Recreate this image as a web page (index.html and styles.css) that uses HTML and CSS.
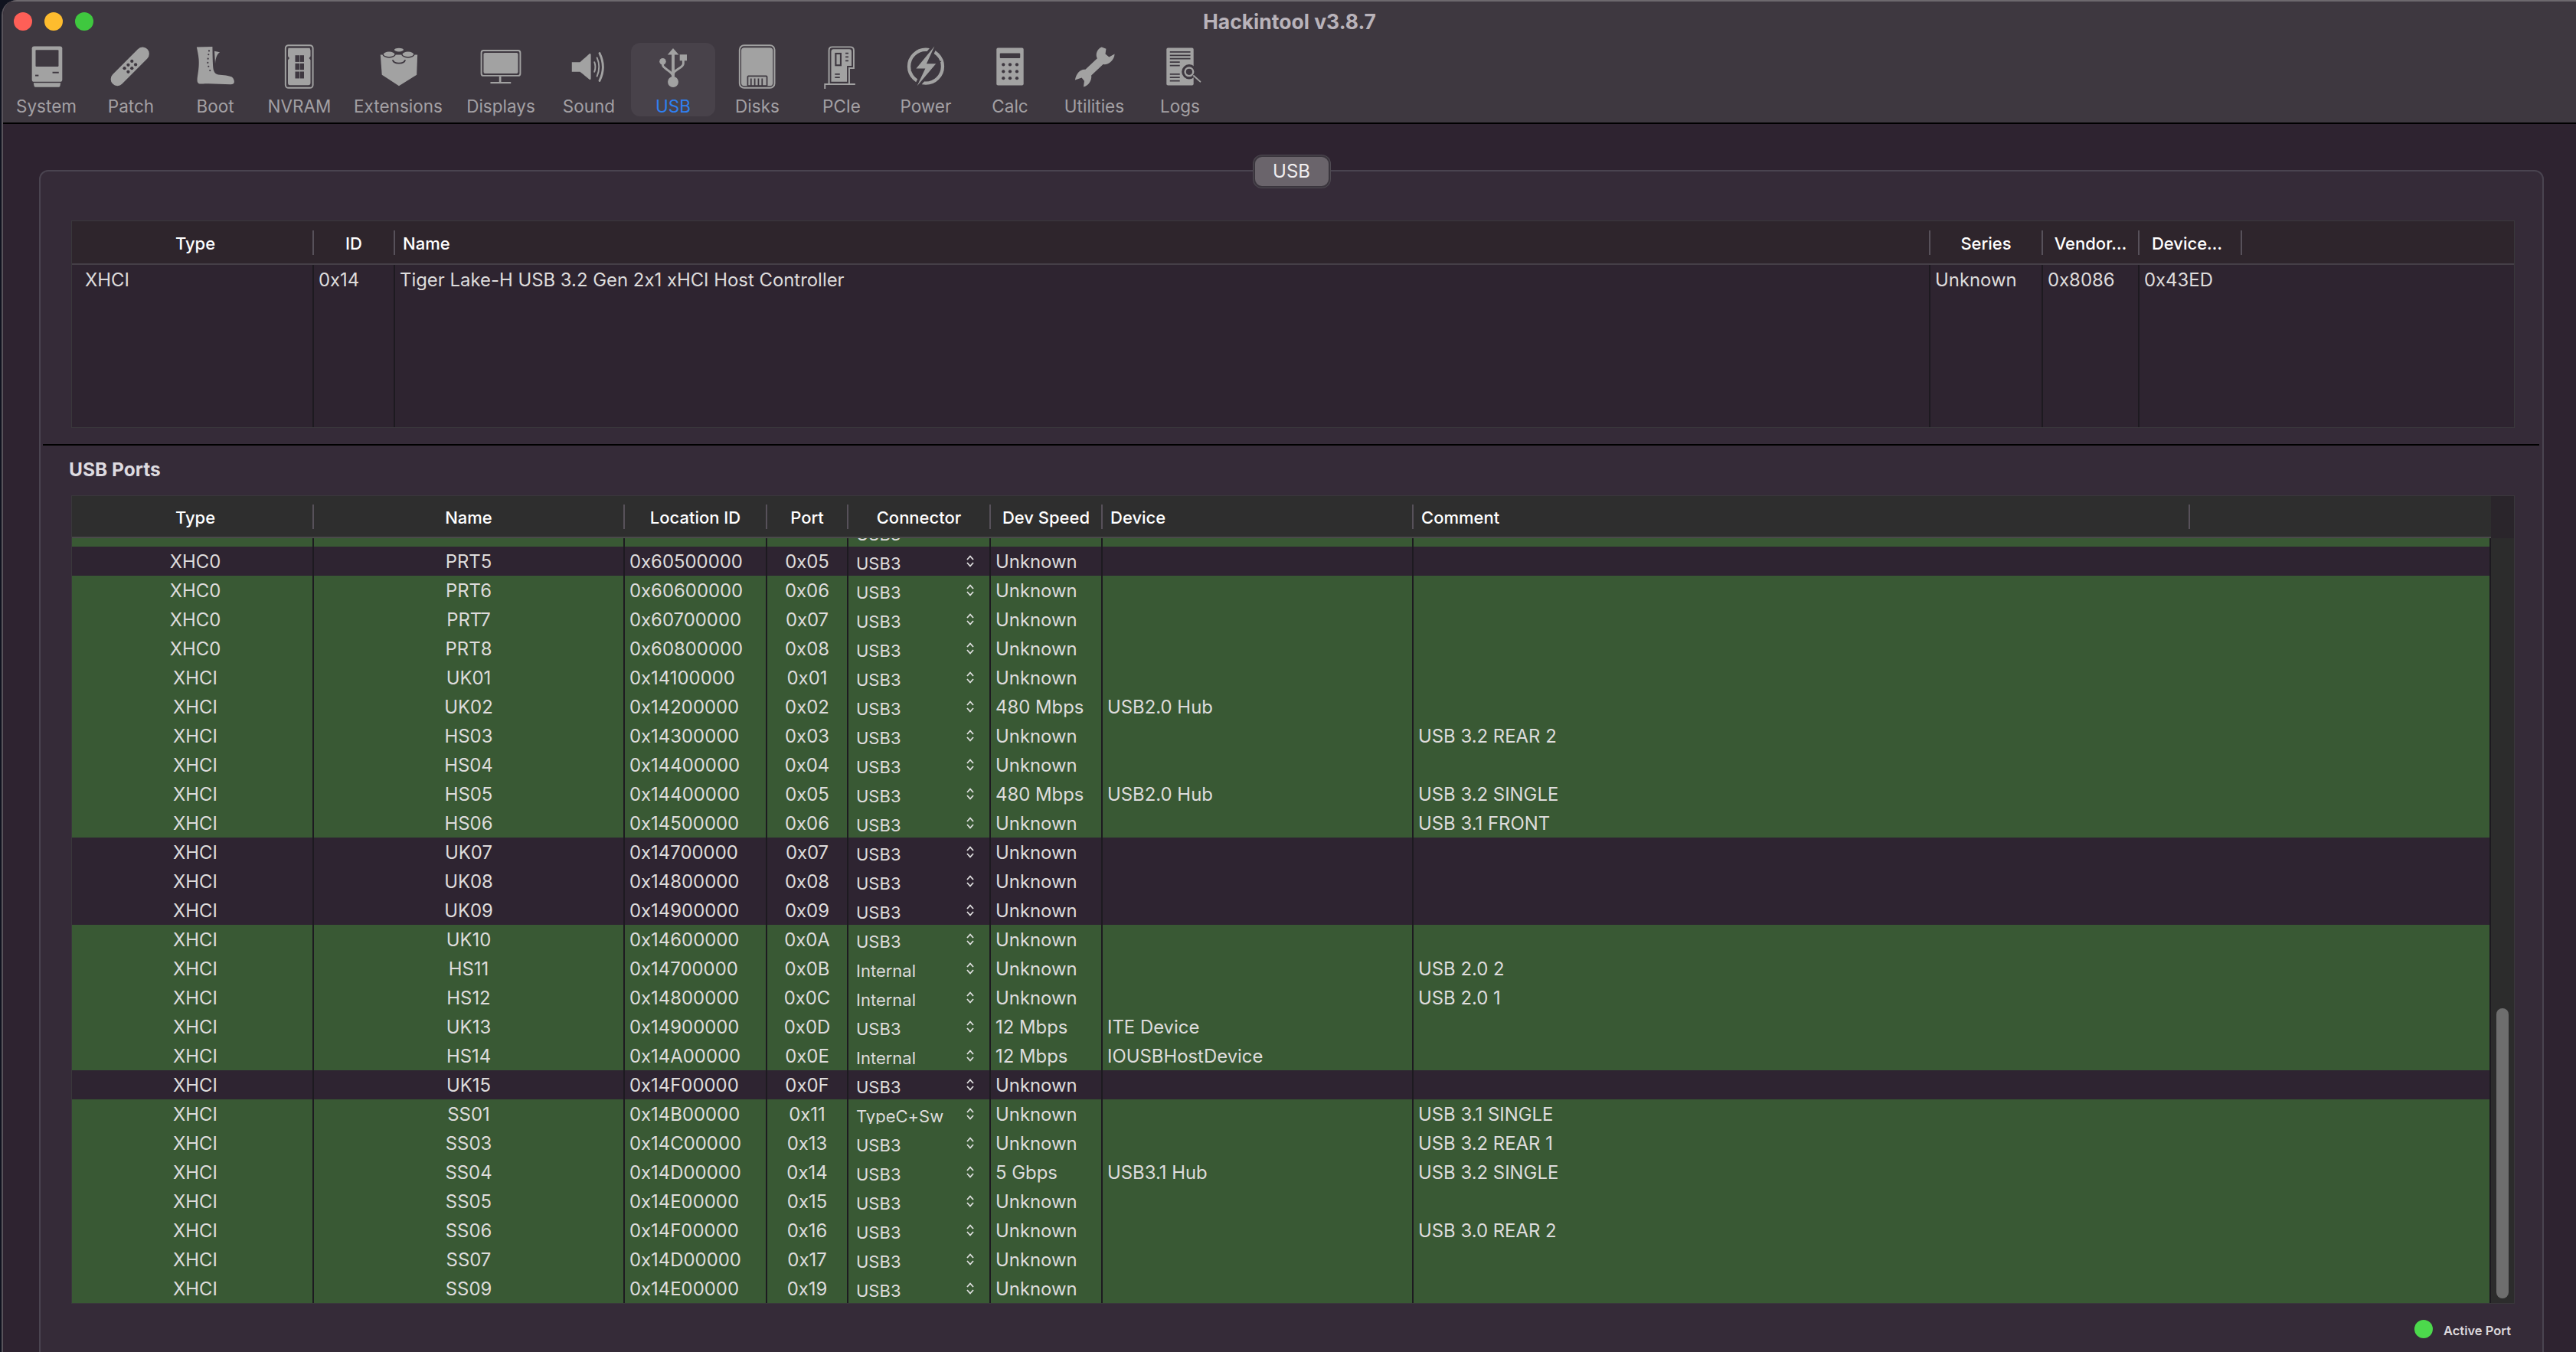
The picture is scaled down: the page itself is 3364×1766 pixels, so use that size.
FILE: index.html
```html
<!DOCTYPE html>
<html lang="en">
<head>
<meta charset="utf-8">
<title>Hackintool v3.8.7</title>
<link rel="stylesheet" href="styles.css">
</head>
<body>
<svg class="defs" width="0" height="0" aria-hidden="true">
  <symbol id="updown" viewBox="0 0 10 16"><path d="M1 6 5 1.500 9 6M1 10 5 14.500 9 10" fill="none" stroke="currentColor" stroke-width="1.800"/></symbol>
</svg>
<div class="window">
  <header class="chrome">
    <div class="titlebar">
      <div class="lights"><span class="light red"></span><span class="light yellow"></span><span class="light green"></span></div>
      <div class="title">Hackintool v3.8.7</div>
    </div>
    <nav class="toolbar">
      <div class="tool tool-first">
        <svg class="icon" viewBox="20.500 58 80 60"><rect x="40.500" y="60.500" width="41" height="48" rx="3"/><path d="M42.700 110H79.300L78.500 114.500Q78.300 115.700 77 115.700H45Q43.700 115.700 43.500 114.500Z"/><g class="hole"><rect x="45.500" y="65.500" width="31" height="22.500" rx="1"/><rect x="45" y="99" width="4.500" height="2"/><rect x="68.300" y="95" width="8.500" height="2"/></g></svg>
        <span class="tool-label">System</span>
      </div>
      <div class="tool">
        <svg class="icon" viewBox="131 58 80 60"><path class="thick" d="M152.700 105 186.700 70.700"/><g class="hole"><circle cx="172.300" cy="80.700" r="2.200"/><circle cx="167.300" cy="85.700" r="2.200"/><circle cx="162.300" cy="90.300" r="2.200"/><circle cx="177.300" cy="85.300" r="2.200"/><circle cx="172.300" cy="90.300" r="2.200"/><circle cx="167.300" cy="95" r="2.200"/></g></svg>
        <span class="tool-label">Patch</span>
      </div>
      <div class="tool">
        <svg class="icon" viewBox="241 58 80 60"><path d="M256 61.500 277.300 61C277.500 70 277.500 82 278.300 90 279 95 281 98 285 98.800 292 99.500 300 100 303.500 102 306 104 307 107 306.700 109 306.500 111 305 112 302 112L272 111C266 110.500 262 112 259 111 257 110 256.500 108 256.800 104 258 95 259.500 88 258.800 78 258.300 72 257 66 256 61.500Z"/><path d="M280 67 287.300 68.500C283.500 71 281.500 76 281 84Z"/><g class="hole"><circle cx="272.700" cy="66.700" r="1.100"/><circle cx="272" cy="71.700" r="1.100"/><circle cx="271.300" cy="77.300" r="1.100"/><circle cx="271" cy="82.700" r="1.100"/><circle cx="272" cy="87.700" r="1.100"/><circle cx="274" cy="93.300" r="1.100"/></g></svg>
        <span class="tool-label">Boot</span>
      </div>
      <div class="tool">
        <svg class="icon" viewBox="351 58 80 60"><rect class="line" x="372.200" y="59.200" width="37" height="57.600" rx="4"/><path d="M376 63H405L406 66V74L404 76.500 406 79V110Q406 113 403 113H378Q375.500 113 375.500 110V79L377.500 76.500 375.500 74V66Z"/><g class="hole"><rect x="385.300" y="72.700" width="5.700" height="9"/><rect x="391.700" y="72.700" width="5.500" height="9"/><rect x="385.300" y="83.700" width="5.700" height="8.700"/><rect x="391.700" y="83.700" width="5.500" height="8.700"/><rect x="385.300" y="94.700" width="5.700" height="9.300"/><rect x="391.700" y="94.700" width="5.500" height="9.300"/></g></svg>
        <span class="tool-label">NVRAM</span>
      </div>
      <div class="tool tool-wide">
        <svg class="icon" viewBox="480 58 80 60"><path d="M496 72 546 72 545 99 521 114 498 99Z"/><g class="studs"><ellipse cx="521" cy="65.300" rx="7" ry="3.200"/><ellipse cx="507.700" cy="71.300" rx="8.300" ry="4.200"/><ellipse cx="533.300" cy="71.300" rx="8.300" ry="4.200"/></g><path class="hole-line" d="M512.500 79C514 85 528 85 529.500 79"/></svg>
        <span class="tool-label">Extensions</span>
      </div>
      <div class="tool tool-mid">
        <svg class="icon" viewBox="614 58 80 60"><rect class="line" x="627.700" y="66.300" width="52.600" height="34" rx="3"/><rect x="630.700" y="69.300" width="46.600" height="28" rx="2"/><rect x="651.700" y="101" width="2.800" height="8"/><rect x="640" y="108.700" width="27.700" height="2.200"/></svg>
        <span class="tool-label">Displays</span>
      </div>
      <div class="tool">
        <svg class="icon" viewBox="729 58 80 60"><path d="M746 82H757L770 70.500Q771.700 70 771.700 72V104Q771.700 106 770 105.500L757 95H746Z"/><path class="line" d="M776.500 82Q779 88.500 776.500 95M780 76Q785.500 88.500 780 101"/><path class="line line-thick" d="M783.500 70Q792.500 88.500 783.500 107"/></svg>
        <span class="tool-label">Sound</span>
      </div>
      <div class="tool tool-active">
        <svg class="icon" viewBox="839 58 80 60"><path d="M879 63.300 886.700 72H881V102H877V72H871.500Z"/><circle cx="879" cy="108.700" r="7.200"/><circle cx="865" cy="81" r="4.400"/><rect x="888" y="71.700" width="9.600" height="8.300"/><path class="line line-thick" d="M865 82V86C865 91 879 94 879 102M892.800 79V84C892.800 90 879 92 879 99"/></svg>
        <span class="tool-label">USB</span>
      </div>
      <div class="tool">
        <svg class="icon" viewBox="949 58 80 60"><rect class="line" x="965" y="59.300" width="47.300" height="57.400" rx="6"/><rect x="967.300" y="62.300" width="42.700" height="51.700" rx="4"/><path class="hole-line" d="M976 114V102Q976 100.800 977 100.800H1001Q1002 100.800 1002 102V114M980.500 104V114M985.500 104V114M990.500 104V114M995.500 104V114M976 114H1002"/></svg>
        <span class="tool-label">Disks</span>
      </div>
      <div class="tool">
        <svg class="icon" viewBox="1059 58 80 60"><path class="line" d="M1076.500 118V111.700H1116.700M1082 111.700V66Q1082 61.500 1086.500 61.500H1110.500Q1115.500 61.500 1115.500 66V90H1109.300V111.700"/><path d="M1085 68Q1085 64.500 1088 64.500H1109.500Q1112.500 64.500 1112.500 68V87H1106.300V108.500H1085Z"/><g class="hole"><rect x="1090" y="69.300" width="9" height="18"/></g><rect x="1092.200" y="71.500" width="4.600" height="13.600"/><path class="hole-line" d="M1104.300 70H1108.300M1104.300 75H1108.300M1104.300 80H1108.300M1090 98.300H1096.700M1090 102.500H1096.700"/></svg>
        <span class="tool-label">PCIe</span>
      </div>
      <div class="tool">
        <svg class="icon" viewBox="1169 58 80 60"><circle class="ring" cx="1209" cy="87.700" r="22.700"/><path class="bolt" d="M1220.700 60.700 1196 90.700H1208.300L1197.300 114 1222.700 84H1210Z"/></svg>
        <span class="tool-label">Power</span>
      </div>
      <div class="tool">
        <svg class="icon" viewBox="1279 58 80 60"><rect x="1300.700" y="62.700" width="36.600" height="50.600" rx="2"/><g class="hole"><rect x="1305.300" y="70" width="27.400" height="6.700" rx="1"/><circle cx="1310" cy="85.300" r="2.200"/><circle cx="1319" cy="85.300" r="2.200"/><circle cx="1328.300" cy="85.300" r="2.200"/><circle cx="1310" cy="94.700" r="2.200"/><circle cx="1319" cy="94.700" r="2.200"/><circle cx="1328.300" cy="94.700" r="2.200"/><circle cx="1310" cy="103.700" r="2.200"/><circle cx="1319" cy="103.700" r="2.200"/><circle cx="1328.300" cy="103.700" r="2.200"/></g></svg>
        <span class="tool-label">Calc</span>
      </div>
      <div class="tool">
        <svg class="icon" viewBox="1389 58 80 60"><path d="M1439 61.500C1433 64 1430 71 1433 77L1417 92C1411 91 1405 96 1403 106L1412 103 1415.500 107.500 1414.500 115.500C1421 114 1426 107 1425 100L1441 85C1448 86 1456 80 1456.500 71L1449 75 1444 71 1445 64Z"/></svg>
        <span class="tool-label">Utilities</span>
      </div>
      <div class="tool tool-last">
        <svg class="icon" viewBox="1501 58 80 60"><rect x="1522.700" y="62.700" width="36.600" height="50.600" rx="2"/><path class="hole-line" d="M1527.300 68.300H1555M1527.300 72.800H1555M1527.300 77.300H1555M1527.300 82H1540.700M1527.300 86.700H1540.700M1527.300 98.300H1540.700M1527.300 102.700H1540.700M1527.300 107.300H1540.700"/><circle class="halo" cx="1553.300" cy="95" r="10"/><circle class="lens" cx="1553.300" cy="95" r="5.500"/><path class="line" d="M1559.500 100.500 1568.300 108.300"/></svg>
        <span class="tool-label">Logs</span>
      </div>
    </nav>
  </header>
  <main class="content">
    <section class="box">
      <div class="box-tab">USB</div>

      <div class="table controllers">
        <div class="head ctrl-cols">
          <div class="hcell center">Type</div>
          <div class="hcell center">ID</div>
          <div class="hcell">Name</div>
          <div class="hcell center">Series</div>
          <div class="hcell center">Vendor…</div>
          <div class="hcell center">Device…</div>
        </div>
        <div class="ctrl-body ctrl-cols">
          <div class="cell cell-type">XHCI</div>
          <div class="cell">0x14</div>
          <div class="cell">Tiger Lake-H USB 3.2 Gen 2x1 xHCI Host Controller</div>
          <div class="cell">Unknown</div>
          <div class="cell">0x8086</div>
          <div class="cell cell-last">0x43ED</div>
        </div>
      </div>

      <div class="divider"></div>
      <h2 class="section-title">USB Ports</h2>

      <div class="table ports">
        <div class="ports-main">
          <div class="head head-ports">
            <div class="hcell center">Type</div>
            <div class="hcell center">Name</div>
            <div class="hcell center">Location ID</div>
            <div class="hcell center">Port</div>
            <div class="hcell center">Connector</div>
            <div class="hcell center">Dev Speed</div>
            <div class="hcell">Device</div>
            <div class="hcell">Comment</div>
            <div class="hcell hcell-end"></div>
          </div>
          <div class="ports-body">
            <div class="row first port-cols"><div class="cell center">XHC0</div><div class="cell center">PRT4</div><div class="cell">0x60400000</div><div class="cell center">0x04</div><div class="cell conn"><span class="conn-text">USB3</span><svg class="updown"><use href="#updown"/></svg></div><div class="cell">Unknown</div><div class="cell"></div><div class="cell"></div></div>
            <div class="row off port-cols"><div class="cell center">XHC0</div><div class="cell center">PRT5</div><div class="cell">0x60500000</div><div class="cell center">0x05</div><div class="cell conn"><span class="conn-text">USB3</span><svg class="updown"><use href="#updown"/></svg></div><div class="cell">Unknown</div><div class="cell"></div><div class="cell"></div></div>
            <div class="row port-cols"><div class="cell center">XHC0</div><div class="cell center">PRT6</div><div class="cell">0x60600000</div><div class="cell center">0x06</div><div class="cell conn"><span class="conn-text">USB3</span><svg class="updown"><use href="#updown"/></svg></div><div class="cell">Unknown</div><div class="cell"></div><div class="cell"></div></div>
            <div class="row port-cols"><div class="cell center">XHC0</div><div class="cell center">PRT7</div><div class="cell">0x60700000</div><div class="cell center">0x07</div><div class="cell conn"><span class="conn-text">USB3</span><svg class="updown"><use href="#updown"/></svg></div><div class="cell">Unknown</div><div class="cell"></div><div class="cell"></div></div>
            <div class="row port-cols"><div class="cell center">XHC0</div><div class="cell center">PRT8</div><div class="cell">0x60800000</div><div class="cell center">0x08</div><div class="cell conn"><span class="conn-text">USB3</span><svg class="updown"><use href="#updown"/></svg></div><div class="cell">Unknown</div><div class="cell"></div><div class="cell"></div></div>
            <div class="row port-cols"><div class="cell center">XHCI</div><div class="cell center">UK01</div><div class="cell">0x14100000</div><div class="cell center">0x01</div><div class="cell conn"><span class="conn-text">USB3</span><svg class="updown"><use href="#updown"/></svg></div><div class="cell">Unknown</div><div class="cell"></div><div class="cell"></div></div>
            <div class="row port-cols"><div class="cell center">XHCI</div><div class="cell center">UK02</div><div class="cell">0x14200000</div><div class="cell center">0x02</div><div class="cell conn"><span class="conn-text">USB3</span><svg class="updown"><use href="#updown"/></svg></div><div class="cell">480 Mbps</div><div class="cell">USB2.0 Hub</div><div class="cell"></div></div>
            <div class="row port-cols"><div class="cell center">XHCI</div><div class="cell center">HS03</div><div class="cell">0x14300000</div><div class="cell center">0x03</div><div class="cell conn"><span class="conn-text">USB3</span><svg class="updown"><use href="#updown"/></svg></div><div class="cell">Unknown</div><div class="cell"></div><div class="cell">USB 3.2 REAR 2</div></div>
            <div class="row port-cols"><div class="cell center">XHCI</div><div class="cell center">HS04</div><div class="cell">0x14400000</div><div class="cell center">0x04</div><div class="cell conn"><span class="conn-text">USB3</span><svg class="updown"><use href="#updown"/></svg></div><div class="cell">Unknown</div><div class="cell"></div><div class="cell"></div></div>
            <div class="row port-cols"><div class="cell center">XHCI</div><div class="cell center">HS05</div><div class="cell">0x14400000</div><div class="cell center">0x05</div><div class="cell conn"><span class="conn-text">USB3</span><svg class="updown"><use href="#updown"/></svg></div><div class="cell">480 Mbps</div><div class="cell">USB2.0 Hub</div><div class="cell">USB 3.2 SINGLE</div></div>
            <div class="row port-cols"><div class="cell center">XHCI</div><div class="cell center">HS06</div><div class="cell">0x14500000</div><div class="cell center">0x06</div><div class="cell conn"><span class="conn-text">USB3</span><svg class="updown"><use href="#updown"/></svg></div><div class="cell">Unknown</div><div class="cell"></div><div class="cell">USB 3.1 FRONT</div></div>
            <div class="row off port-cols"><div class="cell center">XHCI</div><div class="cell center">UK07</div><div class="cell">0x14700000</div><div class="cell center">0x07</div><div class="cell conn"><span class="conn-text">USB3</span><svg class="updown"><use href="#updown"/></svg></div><div class="cell">Unknown</div><div class="cell"></div><div class="cell"></div></div>
            <div class="row off port-cols"><div class="cell center">XHCI</div><div class="cell center">UK08</div><div class="cell">0x14800000</div><div class="cell center">0x08</div><div class="cell conn"><span class="conn-text">USB3</span><svg class="updown"><use href="#updown"/></svg></div><div class="cell">Unknown</div><div class="cell"></div><div class="cell"></div></div>
            <div class="row off port-cols"><div class="cell center">XHCI</div><div class="cell center">UK09</div><div class="cell">0x14900000</div><div class="cell center">0x09</div><div class="cell conn"><span class="conn-text">USB3</span><svg class="updown"><use href="#updown"/></svg></div><div class="cell">Unknown</div><div class="cell"></div><div class="cell"></div></div>
            <div class="row port-cols"><div class="cell center">XHCI</div><div class="cell center">UK10</div><div class="cell">0x14600000</div><div class="cell center">0x0A</div><div class="cell conn"><span class="conn-text">USB3</span><svg class="updown"><use href="#updown"/></svg></div><div class="cell">Unknown</div><div class="cell"></div><div class="cell"></div></div>
            <div class="row port-cols"><div class="cell center">XHCI</div><div class="cell center">HS11</div><div class="cell">0x14700000</div><div class="cell center">0x0B</div><div class="cell conn"><span class="conn-text">Internal</span><svg class="updown"><use href="#updown"/></svg></div><div class="cell">Unknown</div><div class="cell"></div><div class="cell">USB 2.0 2</div></div>
            <div class="row port-cols"><div class="cell center">XHCI</div><div class="cell center">HS12</div><div class="cell">0x14800000</div><div class="cell center">0x0C</div><div class="cell conn"><span class="conn-text">Internal</span><svg class="updown"><use href="#updown"/></svg></div><div class="cell">Unknown</div><div class="cell"></div><div class="cell">USB 2.0 1</div></div>
            <div class="row port-cols"><div class="cell center">XHCI</div><div class="cell center">UK13</div><div class="cell">0x14900000</div><div class="cell center">0x0D</div><div class="cell conn"><span class="conn-text">USB3</span><svg class="updown"><use href="#updown"/></svg></div><div class="cell">12 Mbps</div><div class="cell">ITE Device</div><div class="cell"></div></div>
            <div class="row port-cols"><div class="cell center">XHCI</div><div class="cell center">HS14</div><div class="cell">0x14A00000</div><div class="cell center">0x0E</div><div class="cell conn"><span class="conn-text">Internal</span><svg class="updown"><use href="#updown"/></svg></div><div class="cell">12 Mbps</div><div class="cell">IOUSBHostDevice</div><div class="cell"></div></div>
            <div class="row off port-cols"><div class="cell center">XHCI</div><div class="cell center">UK15</div><div class="cell">0x14F00000</div><div class="cell center">0x0F</div><div class="cell conn"><span class="conn-text">USB3</span><svg class="updown"><use href="#updown"/></svg></div><div class="cell">Unknown</div><div class="cell"></div><div class="cell"></div></div>
            <div class="row port-cols"><div class="cell center">XHCI</div><div class="cell center">SS01</div><div class="cell">0x14B00000</div><div class="cell center">0x11</div><div class="cell conn"><span class="conn-text">TypeC+Sw</span><svg class="updown"><use href="#updown"/></svg></div><div class="cell">Unknown</div><div class="cell"></div><div class="cell">USB 3.1 SINGLE</div></div>
            <div class="row port-cols"><div class="cell center">XHCI</div><div class="cell center">SS03</div><div class="cell">0x14C00000</div><div class="cell center">0x13</div><div class="cell conn"><span class="conn-text">USB3</span><svg class="updown"><use href="#updown"/></svg></div><div class="cell">Unknown</div><div class="cell"></div><div class="cell">USB 3.2 REAR 1</div></div>
            <div class="row port-cols"><div class="cell center">XHCI</div><div class="cell center">SS04</div><div class="cell">0x14D00000</div><div class="cell center">0x14</div><div class="cell conn"><span class="conn-text">USB3</span><svg class="updown"><use href="#updown"/></svg></div><div class="cell">5 Gbps</div><div class="cell">USB3.1 Hub</div><div class="cell">USB 3.2 SINGLE</div></div>
            <div class="row port-cols"><div class="cell center">XHCI</div><div class="cell center">SS05</div><div class="cell">0x14E00000</div><div class="cell center">0x15</div><div class="cell conn"><span class="conn-text">USB3</span><svg class="updown"><use href="#updown"/></svg></div><div class="cell">Unknown</div><div class="cell"></div><div class="cell"></div></div>
            <div class="row port-cols"><div class="cell center">XHCI</div><div class="cell center">SS06</div><div class="cell">0x14F00000</div><div class="cell center">0x16</div><div class="cell conn"><span class="conn-text">USB3</span><svg class="updown"><use href="#updown"/></svg></div><div class="cell">Unknown</div><div class="cell"></div><div class="cell">USB 3.0 REAR 2</div></div>
            <div class="row port-cols"><div class="cell center">XHCI</div><div class="cell center">SS07</div><div class="cell">0x14D00000</div><div class="cell center">0x17</div><div class="cell conn"><span class="conn-text">USB3</span><svg class="updown"><use href="#updown"/></svg></div><div class="cell">Unknown</div><div class="cell"></div><div class="cell"></div></div>
            <div class="row port-cols"><div class="cell center">XHCI</div><div class="cell center">SS09</div><div class="cell">0x14E00000</div><div class="cell center">0x19</div><div class="cell conn"><span class="conn-text">USB3</span><svg class="updown"><use href="#updown"/></svg></div><div class="cell">Unknown</div><div class="cell"></div><div class="cell"></div></div>
          </div>
        </div>
        <div class="scrollbar">
          <div class="scroll-corner"></div>
          <div class="scroll-track"><div class="scroll-thumb"></div></div>
        </div>
      </div>

      <div class="legend"><span class="legend-dot"></span><span class="legend-text">Active Port</span></div>
    </section>
  </main>
</div>
</body>
</html>
```

FILE: styles.css
```css
* { box-sizing: border-box; }

html, body {
  margin: 0;
  height: 1766px;
  overflow: hidden;
  background: #10131f;
}

body {
  font-family: Inter, "Liberation Sans", sans-serif;
  font-variant-ligatures: no-contextual;
  font-feature-settings: "calt" 0;
  color: #dedcdc;
}

.defs { position: absolute; }

.window {
  margin-left: 2px;
  height: 1766px;
  background: #2e2330;
  border-left: 2px solid #57535a;
  border-top-left-radius: 20px;
  overflow: hidden;
}

/* title bar + toolbar */
.chrome {
  height: 162px;
  background: #3e3840;
  border-top: 2px solid #6d696e;
  border-bottom: 2px solid #000;
}

.titlebar {
  height: 52px;
  display: grid;
  grid-template-columns: 1fr auto 1fr;
  align-items: center;
}

.lights {
  display: flex;
  gap: 16px;
  padding-left: 14px;
}

.light {
  width: 24px;
  height: 24px;
  border-radius: 50%;
}
.red { background: #fe5f57; }
.yellow { background: #febc2e; }
.green { background: #3fc83f; }

.title {
  font-size: 26.500px;
  font-weight: 700;
  color: #b9b3ba;
  line-height: 52px;
}

.toolbar {
  display: flex;
  padding: 2px 0 0 1px;
  height: 98px;
}

.tool {
  width: 110px;
  height: 96px;
  padding-top: 2px;
  border-radius: 12px;
  display: flex;
  flex-direction: column;
  align-items: center;
  color: #a3a0a4;
}
.tool-first { width: 111px; }
.tool-wide { width: 148px; }
.tool-mid { width: 120px; }
.tool-last { width: 114px; }
.tool-active { background: #48424a; }
.tool-active .tool-label { color: #2f80f2; }

.tool-label {
  margin-top: 10px;
  font-size: 22.500px;
  line-height: 26px;
  white-space: nowrap;
}

.icon {
  display: block;
  width: 80px;
  height: 60px;
  fill: #a2a2a2;
}
.icon .hole { fill: #3e3840; }
.icon .thick { fill: none; stroke: #a2a2a2; stroke-width: 18; stroke-linecap: round; }
.icon .line { fill: none; stroke: #a2a2a2; stroke-width: 2; stroke-linecap: round; }
.icon .line-thick { stroke-width: 3; }
.icon .hole-line { fill: none; stroke: #3e3840; stroke-width: 1.800; }
.icon .studs { stroke: #3e3840; stroke-width: 1.500; }
.icon .ring { fill: none; stroke: #a2a2a2; stroke-width: 4.500; }
.icon .bolt { stroke: #3e3840; stroke-width: 7; paint-order: stroke; stroke-linejoin: miter; }
.icon .halo { fill: #3e3840; }
.icon .lens { fill: #3e3840; stroke: #a2a2a2; stroke-width: 2.500; }
.tool-active .hole { fill: #48424a; }

/* main area */
.content {
  height: 1604px;
  padding: 60px 42px 0 47px;
}

.box {
  position: relative;
  height: 1600px;
  padding: 64px 36px 0 40px;
  background: #352b38;
  border: 2px solid #4a4450;
  border-radius: 12px;
}

.box-tab {
  position: absolute;
  top: -21px;
  left: 50%;
  transform: translateX(-50%);
  width: 100px;
  height: 42px;
  border-radius: 11px;
  background: #6a646b;
  border: 2px solid #3a353d;
  box-shadow: 0 0 0 1px #4f4a52;
  font-size: 24px;
  line-height: 38px;
  text-align: center;
  color: #f0eef0;
}

.table {
  border: 1px solid #3a383c;
}

.controllers {
  display: flex;
  flex-direction: column;
  height: 271px;
  background: #2e2430;
}

.head {
  display: grid;
  align-items: center;
  height: 57px;
  background: #2e252c;
  border-bottom: 2px solid #453f47;
}

.ctrl-cols { grid-template-columns: 316px 106px 2005px 147px 126px 134px 1fr; }
.port-cols { grid-template-columns: 316px 406px 186px 106px 186px 146px 406px 1fr; }

.hcell {
  height: 32px;
  padding: 0 10px;
  border-right: 2px solid #57515a;
  font-size: 22px;
  font-weight: 500;
  line-height: 34px;
  color: #fff;
  white-space: nowrap;
  overflow: hidden;
}
.center { text-align: center; }
.center:first-child { padding-left: 18px; }
.hcell-end { border-right: 0; }
.ctrl-cols .hcell:last-child { padding-right: 18px; }

.ctrl-body {
  display: grid;
  flex: 1;
}

.cell {
  height: 100%;
  padding: 0 6px;
  border-right: 2px solid #1d1a20;
  font-size: 23.900px;
  line-height: 40px;
  white-space: nowrap;
  overflow: hidden;
}
.cell.center:first-child { padding-left: 14px; }
.cell-type { padding-left: 17px; }
.cell-last { border-right: 0; }

.divider {
  height: 2px;
  margin: 21px -32px 0 -37px;
  background: #000;
}

.section-title {
  margin: 16px 0 19px -3px;
  font-size: 24.500px;
  line-height: 30px;
  font-weight: 700;
  color: #dedbe0;
}

.ports {
  display: flex;
  height: 1056px;
  background: #2e2e2e;
}

.ports-main {
  flex: 1;
  min-width: 0;
  display: flex;
  flex-direction: column;
}

.head-ports {
  grid-template-columns: 316px 406px 186px 106px 186px 146px 406px 1014px 1fr;
  height: 55px;
  background: #2e2e2e;
  border-bottom: 2px solid #4a4a4a;
}

.ports-body {
  height: 999px;
  overflow: hidden;
}

.row {
  display: grid;
  height: 38px;
  background: #395934;
}
.row.off { background: #2e2431; }
.row.first { margin-top: -27px; }
.row.first .cell { line-height: 36px; }

.conn {
  display: flex;
  justify-content: space-between;
  padding: 0 20px 0 10px;
}

.conn-text {
  height: 20px;
  margin-top: 12px;
  overflow: hidden;
  font-size: 22px;
  line-height: 20px;
}
.row.first .conn-text { line-height: 20px; }

.updown {
  align-self: center;
  width: 10px;
  height: 16px;
  color: #e0e0e0;
}

.scrollbar {
  width: 30px;
  display: flex;
  flex-direction: column;
}
.scroll-corner {
  height: 55px;
  background: #2a252b;
}
.scroll-track {
  flex: 1;
  padding: 614px 7px 0;
  background: #2c2c2c;
}
.scroll-thumb {
  height: 379px;
  border-radius: 8px;
  background: #6e6e6e;
}

.legend {
  display: flex;
  align-items: center;
  justify-content: flex-end;
  margin-top: 21px;
  padding-right: 5px;
}
.legend-dot {
  width: 24px;
  height: 24px;
  border-radius: 50%;
  background: #4cd94c;
}
.legend-text {
  margin-left: 14px;
  padding-top: 4px;
  font-size: 16.500px;
  font-weight: 600;
  color: #dcd8dc;
}
```
